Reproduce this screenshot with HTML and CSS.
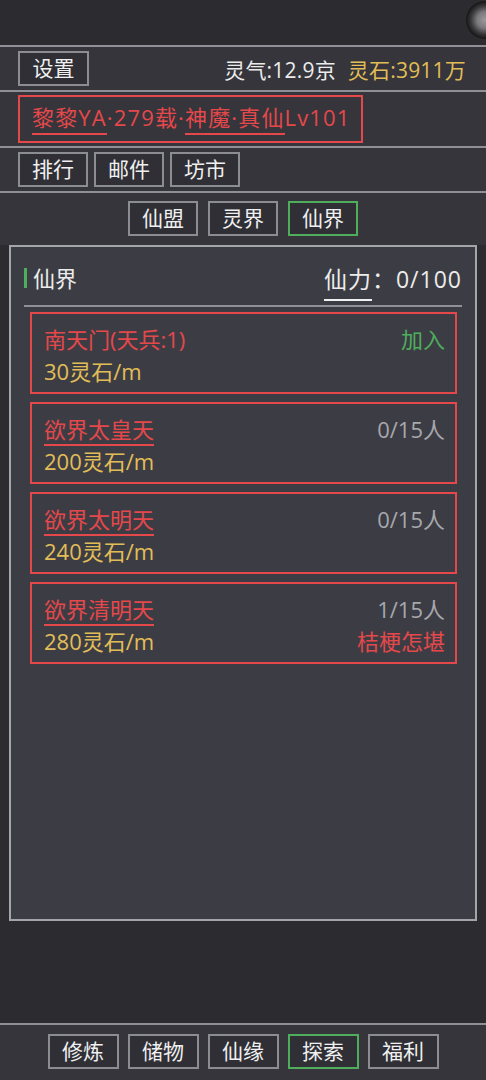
FILE: index.html
```html
<!DOCTYPE html>
<html lang="zh-CN">
<head>
    <meta charset="UTF-8">
    <meta name="viewport" content="width=device-width, initial-scale=1.0">
    <title>仙界</title>
    <link rel="stylesheet" href="styles.css">
</head>
<body>

<div class="app">
    <div class="top-space">
        <div class="float-ball"></div>
    </div>

    <div class="bar bar-info">
        <button class="btn">设置</button>
        <div class="res">
            <span class="qi">灵气:12.9京</span>
            <span class="stone">灵石:3911万</span>
        </div>
    </div>

    <div class="bar bar-player">
        <div class="player">
            <span class="ul">黎黎YA</span><span>·279载·</span><span class="ul">神魔·真仙</span><span>Lv101</span>
        </div>
    </div>

    <div class="bar bar-menu">
        <button class="btn">排行</button>
        <button class="btn">邮件</button>
        <button class="btn">坊市</button>
    </div>

    <div class="main">
        <div class="tabs">
            <button class="btn">仙盟</button>
            <button class="btn">灵界</button>
            <button class="btn active">仙界</button>
        </div>

        <div class="panel">
            <div class="panel-head">
                <span class="panel-title">仙界</span>
                <span class="power"><span class="power-label">仙力</span>：0/100</span>
            </div>

            <div class="realm">
                <div class="realm-row">
                    <span class="realm-name">南天门(天兵:1)</span>
                    <span class="join">加入</span>
                </div>
                <div class="realm-row">
                    <span class="cost">30灵石/m</span>
                </div>
            </div>

            <div class="realm">
                <div class="realm-row">
                    <span class="realm-name ul">欲界太皇天</span>
                    <span class="count">0/15人</span>
                </div>
                <div class="realm-row">
                    <span class="cost">200灵石/m</span>
                </div>
            </div>

            <div class="realm">
                <div class="realm-row">
                    <span class="realm-name ul">欲界太明天</span>
                    <span class="count">0/15人</span>
                </div>
                <div class="realm-row">
                    <span class="cost">240灵石/m</span>
                </div>
            </div>

            <div class="realm">
                <div class="realm-row">
                    <span class="realm-name ul">欲界清明天</span>
                    <span class="count">1/15人</span>
                </div>
                <div class="realm-row">
                    <span class="cost">280灵石/m</span>
                    <span class="owner">桔梗怎堪</span>
                </div>
            </div>
        </div>
    </div>

    <div class="bottom-nav">
        <button class="btn">修炼</button>
        <button class="btn">储物</button>
        <button class="btn">仙缘</button>
        <button class="btn active">探索</button>
        <button class="btn">福利</button>
    </div>
</div>

</body>
</html>
```

FILE: styles.css
```css
* {
    box-sizing: border-box;
}

body {
    margin: 0;
    background: #2c2b30;
    font-family: "Open Sans", "Noto Sans CJK SC", sans-serif;
    color: #ececec;
}

.app {
    width: 486px;
    height: 1080px;
    display: flex;
    flex-direction: column;
    overflow: hidden;
}

.top-space {
    height: 45px;
    position: relative;
}

.float-ball {
    position: absolute;
    left: 466px;
    top: 1px;
    width: 38px;
    height: 38px;
    border-radius: 50%;
    background: radial-gradient(circle, #9a9a9c 0%, #7a7a7e 30%, #3a3a3c 52%, #161617 70%, #1e1e20 100%);
}

.bar {
    border-top: 2px solid #8f8f96;
    background: #35353b;
    display: flex;
    align-items: center;
    padding: 0 18px;
}

.btn {
    font-family: inherit;
    font-size: 21px;
    color: #f0f0f0;
    background: #2f2f35;
    border: 2px solid #8c8c93;
    border-radius: 0;
    height: 35px;
    padding: 0;
    line-height: 1;
    cursor: pointer;
}

.btn.active {
    border-color: #4fae5c;
}

.bar-info {
    height: 45px;
    justify-content: space-between;
    padding-right: 20px;
}

.bar-info .btn {
    width: 71px;
}

.res {
    font-size: 21px;
    display: flex;
    gap: 12px;
    letter-spacing: 0.2px;
}

.stone {
    color: #e2bd57;
}

.bar-player {
    height: 56px;
    align-items: flex-start;
    padding-top: 3px;
}

.player {
    border: 2px solid #e5484b;
    color: #e5484b;
    font-size: 22px;
    line-height: 26px;
    height: 48px;
    padding: 7px 10px 0 12px;
    display: flex;
    align-items: flex-start;
    white-space: nowrap;
    letter-spacing: 1.15px;
}

.player .ul {
    border-bottom: 2px solid #e5484b;
    padding-bottom: 3px;
}

.bar-menu {
    height: 45px;
    gap: 6px;
}

.bar-menu .btn {
    width: 70px;
}

.main {
    flex: 1;
    border-top: 2px solid #8f8f96;
    background: #2c2b30;
    display: flex;
    flex-direction: column;
}

.tabs {
    display: flex;
    justify-content: center;
    gap: 10px;
    padding: 8px 0 9px;
    background: #35353b;
}

.tabs .btn {
    width: 70px;
}

.panel {
    margin: 0 9px;
    height: 676px;
    background: #3c3d44;
    border: 2px solid #a4a4ab;
    padding: 0 13px;
}

.panel-head {
    height: 60px;
    display: flex;
    justify-content: space-between;
    align-items: center;
    border-bottom: 2px solid #8e9096;
    padding-top: 4px;
    margin-bottom: 5px;
}

.panel-title {
    font-size: 22px;
    border-left: 3px solid #4fae5c;
    padding-left: 6px;
    line-height: 20px;
}

.power {
    font-size: 23px;
    letter-spacing: 1px;
}

.power-label {
    border-bottom: 2px solid #f0f0f0;
    padding-bottom: 4px;
}

.realm {
    border: 2px solid #e5484b;
    height: 82px;
    margin: 0 5px 8px 6px;
    padding: 10px 10px 0 12px;
    font-size: 22px;
    line-height: 30px;
}

.realm-row {
    display: flex;
    justify-content: space-between;
    align-items: flex-start;
    height: 32px;
}

.realm-row + .realm-row {
    height: 30px;
}

.realm-name {
    color: #e5484b;
}

.realm-name.ul {
    border-bottom: 2px solid #e5484b;
}

.join {
    color: #4fae5c;
}

.count {
    color: #a7a7ad;
}

.cost {
    color: #e2bd57;
}

.owner {
    color: #e5484b;
}

.bottom-nav {
    height: 57px;
    border-top: 2px solid #8f8f96;
    background: #35353b;
    display: flex;
    justify-content: center;
    gap: 9px;
    padding-top: 9px;
}

.bottom-nav .btn {
    width: 71px;
}
```
